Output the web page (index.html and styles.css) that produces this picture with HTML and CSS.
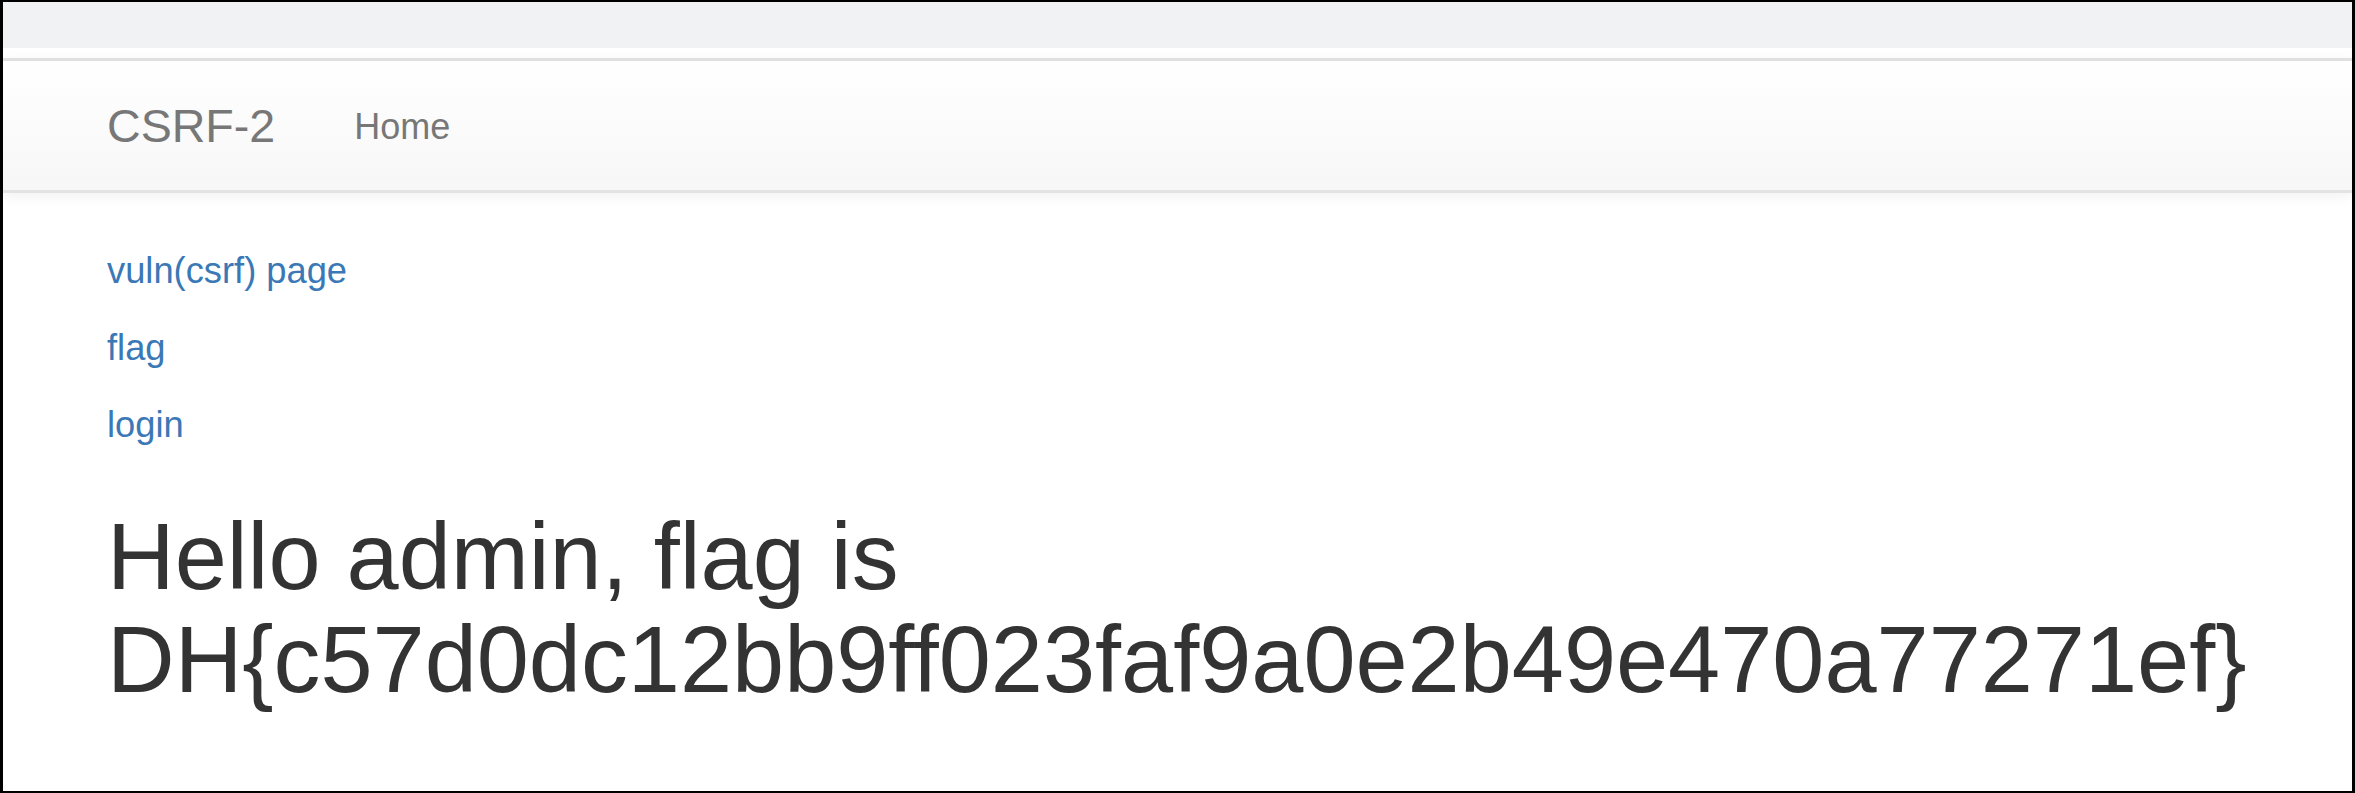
FILE: index.html
```html
<!DOCTYPE html>
<html lang="en">
<head>
<meta charset="utf-8">
<title>CSRF-2</title>
<link rel="stylesheet" href="styles.css">
</head>
<body>
<div class="frame">
  <div class="topbar"></div>
  <div class="topgap"></div>
  <nav class="navbar">
    <a class="brand" href="#">CSRF-2</a>
    <a class="nav-link" href="#">Home</a>
  </nav>
  <main class="container">
    <p class="item"><a href="#">vuln(csrf) page</a></p>
    <p class="item"><a href="#">flag</a></p>
    <p class="item"><a href="#">login</a></p>
    <h1 class="title">Hello admin, flag is DH{c57d0dc12bb9ff023faf9a0e2b49e470a77271ef}</h1>
  </main>
</div>
</body>
</html>
```

FILE: styles.css
```css
html, body {
  margin: 0;
  padding: 0;
  background: #fff;
}

.frame {
  box-sizing: border-box;
  width: 2355px;
  height: 793px;
  border-top: 2px solid #000;
  border-left: 3px solid #000;
  border-right: 3px solid #000;
  border-bottom: 2px solid #000;
  overflow: hidden;
  font-family: "Liberation Sans", Arial, sans-serif;
  color: #333;
  background: #fff;
}

.topbar {
  height: 46px;
  background: #f1f2f4;
}

.topgap {
  height: 10px;
  background: #fff;
}

.navbar {
  display: flex;
  align-items: flex-start;
  box-sizing: border-box;
  height: 135px;
  padding: 40px 0 0 65px;
  border-top: 3px solid #e0e0e0;
  border-bottom: 3px solid #e3e3e3;
  background: linear-gradient(to bottom, #ffffff 0%, #f7f7f7 100%);
  box-shadow: 0 3px 12px rgba(0, 0, 0, 0.06);
  position: relative;
}

.brand {
  padding: 0 38px 0 39px;
  font-size: 46.6px;
  line-height: 51.4px;
  color: #777;
  text-decoration: none;
}

.nav-link {
  padding: 0 38px 0 41px;
  font-size: 36px;
  line-height: 51.4px;
  color: #777;
  text-decoration: none;
}

.container {
  padding: 52px 0 0 104px;
}

.item {
  margin: 0 0 25.7px 0;
  font-size: 36.3px;
  line-height: 51.4px;
}

.item a {
  color: #3a78b6;
  text-decoration: none;
}

.title {
  margin: 54px 0 0 0;
  font-size: 93.7px;
  line-height: 1.1;
  font-weight: 500;
  color: #333;
}
```
